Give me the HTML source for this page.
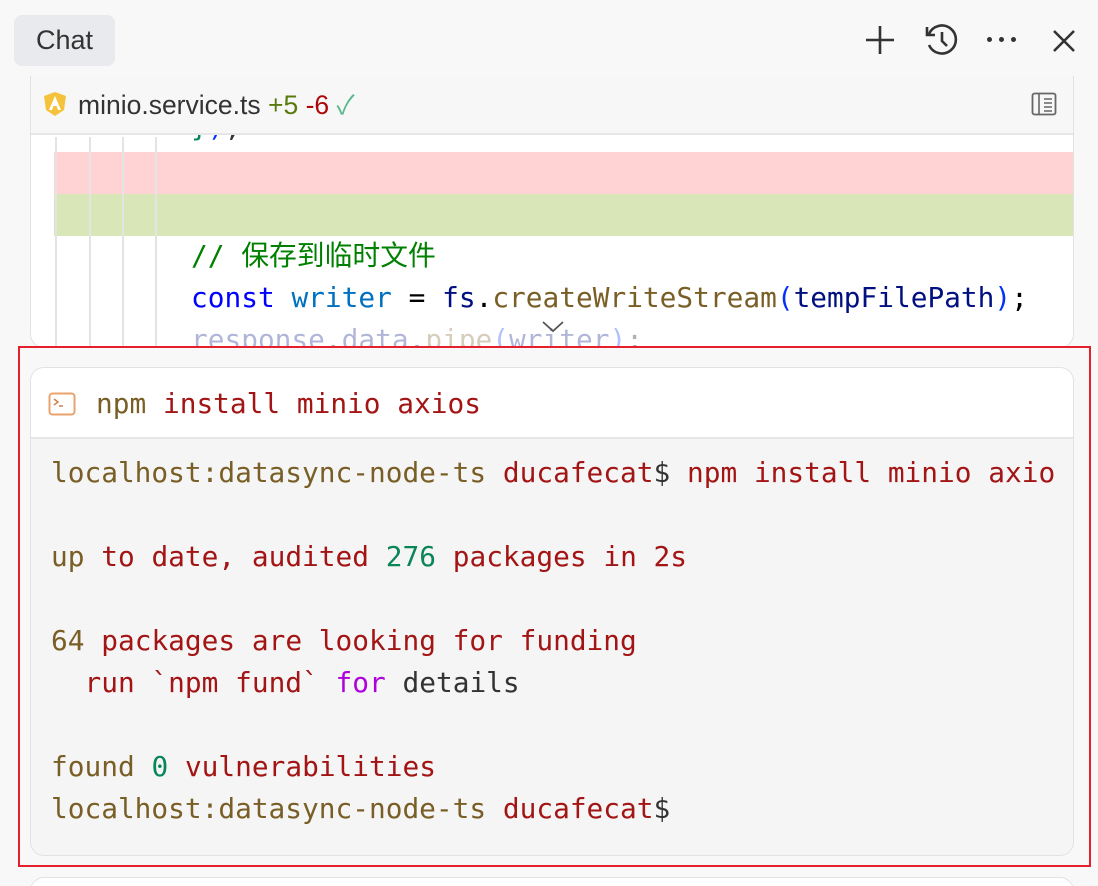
<!DOCTYPE html>
<html><head><meta charset="utf-8"><style>
*{margin:0;padding:0;box-sizing:border-box}
html,body{width:1098px;height:886px;overflow:hidden}
body{background:#f8f8f8;position:relative;font-family:"Liberation Sans","Noto Sans CJK SC",sans-serif}
.mono{font-family:"DejaVu Sans Mono","Liberation Mono","Noto Sans CJK SC",monospace;font-size:27.8px}
.pre{white-space:pre}
.tab{position:absolute;left:14px;top:15px;width:101px;height:51px;background:#e9eaed;border-radius:8px;font-size:27px;color:#333;line-height:51px;text-align:center}
.card1{position:absolute;left:30px;top:76px;width:1044px;height:272px;border:1px solid #e2e2e2;border-top:none;border-radius:0 0 14px 14px;background:#fff;overflow:hidden}
.h1{height:59px;background:#f7f7f7;border-bottom:2px solid #e6e6e6;position:absolute;left:0;top:0;width:100%;z-index:2}
.g{position:absolute;top:61px;width:2px;height:248px;background:#e4e4e4}
.row{position:absolute;left:23px;width:1020px;height:42px}
.line{position:absolute;left:160px;height:42px;line-height:42px;white-space:pre}
.term{position:absolute;left:30px;top:367px;width:1044px;height:489px;border:1px solid #e2e2e2;border-radius:14px;background:#f5f5f5;overflow:hidden}
.th{height:71px;background:#fff;border-bottom:2px solid #e6e6e6;position:relative}
.tb{position:absolute;left:20px;top:84px;width:1003px;overflow:hidden}
.tb div{height:42px;line-height:42px;white-space:pre}
.o{color:#795e26}.r{color:#a31515}.gr{color:#098658}.p{color:#af00db}.d{color:#333}
</style></head><body>
<div class="tab">Chat</div>
<svg style="position:absolute;left:862px;top:22px" width="36" height="36" viewBox="0 0 36 36"><path d="M18 4V32M4 18H32" stroke="#333" stroke-width="2.6" fill="none"/></svg>
<svg style="position:absolute;left:924px;top:22px" width="38" height="36" viewBox="0 0 38 36"><path d="M5 12A14 14 0 1 1 5 23" stroke="#333" stroke-width="2.6" fill="none"/><path d="M3 5V13H11" stroke="#333" stroke-width="2.6" fill="none"/><path d="M18 10V19L23 24" stroke="#333" stroke-width="2.6" fill="none"/></svg>
<div style="position:absolute;left:987px;top:37px;width:30px;height:6px"><span style="position:absolute;left:0;width:5px;height:5px;border-radius:50%;background:#333"></span><span style="position:absolute;left:12px;width:5px;height:5px;border-radius:50%;background:#333"></span><span style="position:absolute;left:24px;width:5px;height:5px;border-radius:50%;background:#333"></span></div>
<svg style="position:absolute;left:1050px;top:27px" width="28" height="28" viewBox="0 0 28 28"><path d="M4 4L24 24M24 4L4 24" stroke="#333" stroke-width="2.6" fill="none"/></svg>

<div class="card1">
 <div class="row" style="top:76px;background:#ffd2d4"></div>
 <div class="row" style="top:118px;background:#d9e6b8"></div>
 <div class="g" style="left:24px"></div><div class="g" style="left:58px"></div><div class="g" style="left:91px"></div><div class="g" style="left:124px"></div>
 <div class="line mono" style="top:30px"><span style="color:#098658">}</span><span style="color:#0431fa">)</span><span style="color:#333">;</span></div>
 <div class="line mono" style="top:159px;color:#008000">// 保存到临时文件</div>
 <div class="line mono" style="top:201px"><span style="color:#0000ff">const</span> <span style="color:#0070c1">writer</span> = <span style="color:#001080">fs</span>.<span style="color:#795e26">createWriteStream</span><span style="color:#0431fa">(</span><span style="color:#001080">tempFilePath</span><span style="color:#0431fa">)</span>;</div>
 <div class="line mono" style="top:243px;opacity:.3"><span style="color:#001080">response</span>.<span style="color:#001080">data</span>.<span style="color:#795e26">pipe</span><span style="color:#0431fa">(</span><span style="color:#001080">writer</span><span style="color:#0431fa">)</span>;</div>
 <svg style="position:absolute;left:510px;top:244px" width="24" height="14" viewBox="0 0 24 14"><path d="M2 2L12 11L22 2" stroke="#555" stroke-width="1.8" fill="none"/></svg>
 <div class="h1">
  <svg style="position:absolute;left:12px;top:15px" width="24" height="26" viewBox="0 0 24 26"><path d="M12 1L1 5L3 19L12 25L21 19L23 5Z" fill="#f5c23c"/><path d="M12 5L6 19H9L10.5 15H13.5L15 19H18Z" fill="#fff"/></svg>
  <div style="position:absolute;left:47px;top:0;line-height:59px;font-size:26.5px;color:#333;white-space:nowrap">minio.service.ts <span style="color:#587c0c">+5</span> <span style="color:#ad0707">-6</span> <span style="color:#5ab88c">✓</span></div>
  <svg style="position:absolute;left:1000px;top:16px" width="26" height="24" viewBox="0 0 26 24"><rect x="1.5" y="1.5" width="23" height="21" rx="2" stroke="#666" stroke-width="1.8" fill="none"/><path d="M8 2V22M13 7H21M13 11H21M13 15H21M13 19H21" stroke="#666" stroke-width="1.6"/></svg>
 </div>
</div>

<div style="position:absolute;left:18px;top:346px;width:1073px;height:521px;border:2px solid #e3202b"></div>
<div class="term">
 <div class="th">
  <svg style="position:absolute;left:17px;top:24px" width="28" height="24" viewBox="0 0 28 24"><rect x="1.5" y="1.5" width="25" height="21" rx="3" stroke="#e8a36f" stroke-width="2" fill="none"/><path d="M6 7L10 10L6 13M11 14H15" stroke="#d08050" stroke-width="1.5" fill="none"/></svg>
  <div class="mono pre" style="position:absolute;left:65px;top:0;line-height:71px"><span class="o">npm</span> <span class="r">install minio axios</span></div>
 </div>
 <div class="tb mono"><div><span class="o">localhost:datasync-node-ts</span> <span class="r">ducafecat</span><span class="d">$</span> <span class="r">npm install minio axios</span></div><div></div><div><span class="o">up</span> <span class="r">to date, audited</span> <span class="gr">276</span> <span class="r">packages in 2s</span></div><div></div><div><span class="o">64</span> <span class="r">packages are looking for funding</span></div><div>  <span class="r">run `npm fund`</span> <span class="p">for</span> <span class="d">details</span></div><div></div><div><span class="o">found</span> <span class="gr">0</span> <span class="r">vulnerabilities</span></div><div><span class="o">localhost:datasync-node-ts</span> <span class="r">ducafecat</span><span class="d">$</span></div></div>
</div>
<div style="position:absolute;left:30px;top:877px;width:1044px;height:30px;border:1px solid #e2e2e2;border-radius:14px;background:#fff"></div>
</body></html>
